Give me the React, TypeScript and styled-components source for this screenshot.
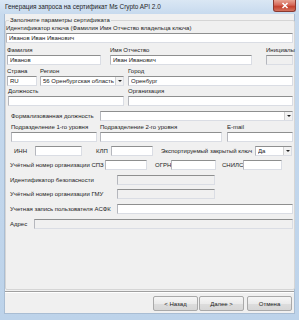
import React from "react";
import styled, { createGlobalStyle } from "styled-components";

const GlobalStyle = createGlobalStyle`
  html, body {
    margin: 0;
    padding: 0;
    background: #ffffff;
  }
  body {
    font-family: "Liberation Sans", "DejaVu Sans", sans-serif;
    font-size: 6px;
    color: #222;
  }
`;

interface FieldProps {
  label: string;
  width: number;
  ml?: number;
  value?: string;
  disabled?: boolean;
  combo?: boolean;
}

// label above, box below
const Field = ({ label, width, ml, value, disabled, combo }: FieldProps) => (
  <StyledField $w={width} $ml={ml}>
    <StyledLabel>{label}</StyledLabel>
    <Box value={value} disabled={disabled} combo={combo} />
  </StyledField>
);

interface BoxProps {
  value?: string;
  disabled?: boolean;
  combo?: boolean;
  width?: number;
}

const Box = ({ value, disabled, combo, width }: BoxProps) => (
  <StyledBox $disabled={disabled} $w={width}>
    <span>{value}</span>
    {combo && (
      <StyledArrow>
        <i />
      </StyledArrow>
    )}
  </StyledBox>
);

interface InlineProps {
  label: string;
  labelWidth: number;
  boxWidth: number;
  ml?: number;
  disabled?: boolean;
  value?: string;
  combo?: boolean;
}

// label to the left, box to the right
const Inline = ({ label, labelWidth, boxWidth, ml, disabled, value, combo }: InlineProps) => (
  <StyledInline $ml={ml}>
    <StyledSideLabel $w={labelWidth}>{label}</StyledSideLabel>
    <Box width={boxWidth} disabled={disabled} value={value} combo={combo} />
  </StyledInline>
);

const App = () => {
  return (
    <>
      <GlobalStyle />
      <StyledWindow>
        <StyledTitleBar>
          <StyledTitle>Генерация запроса на сертификат Ms Crypto API 2.0</StyledTitle>
          <StyledClose>
            <svg width="8" height="7" viewBox="0 0 8 7">
              <path d="M1.5 1 L6.5 6 M6.5 1 L1.5 6" stroke="#fff" strokeWidth="1.5" />
            </svg>
          </StyledClose>
        </StyledTitleBar>
        <StyledClient>
          <StyledGroup>
            <StyledLegend>Заполните параметры сертификата</StyledLegend>
            <StyledRow $mt={0}>
              <Field label="Идентификатор ключа (Фамилия Имя Отчество владельца ключа)" width={287} value="Иванов Иван Иванович" />
            </StyledRow>
            <StyledRow $mt={3} $pl={1}>
              <Field label="Фамилия" width={94} value="Иванов" />
              <Field label="Имя Отчество" ml={9} width={142} value="Иван Иванович" />
              <Field label="Инициалы" ml={14} width={27} disabled />
            </StyledRow>
            <StyledRow $mt={2} $pl={1}>
              <Field label="Страна" width={30} value="RU" />
              <Field label="Регион" ml={3} width={84} value="56 Оренбургская область" combo />
              <Field label="Город" ml={4} width={165} value="Оренбург" />
            </StyledRow>
            <StyledRow $mt={1} $pl={2}>
              <Field label="Должность" width={116} />
              <Field label="Организация" ml={4} width={165} />
            </StyledRow>
            <StyledRow $mt={5} $pl={5}>
              <Inline label="Формализованная должность" labelWidth={89} boxWidth={193} combo />
            </StyledRow>
            <StyledRow $mt={2} $pl={5}>
              <Field label="Подразделение 1-го уровня" width={86} />
              <Field label="Подразделение 2-го уровня" ml={3} width={122} />
              <Field label="E-mail" ml={5} width={66} />
            </StyledRow>
            <StyledRow $mt={4} $pl={8}>
              <Inline label="ИНН" labelWidth={21} boxWidth={47} />
              <Inline label="КЛП" ml={14} labelWidth={15} boxWidth={42} />
              <Inline label="Экспортируемый закрытый ключ" ml={8} labelWidth={94} boxWidth={37} value="Да" combo />
            </StyledRow>
            <StyledRow $mt={4} $pl={4}>
              <Inline label="Учётный номер организации СПЗ" labelWidth={95} boxWidth={42} />
              <Inline label="ОГРН" ml={8} labelWidth={16} boxWidth={45} />
              <Inline label="СНИЛС" ml={6} labelWidth={21} boxWidth={39} />
            </StyledRow>
            <StyledRow $mt={5} $pl={4}>
              <Inline label="Идентификатор безопасности" labelWidth={107} boxWidth={98} disabled />
            </StyledRow>
            <StyledRow $mt={4} $pl={4}>
              <Inline label="Учётный номер организации ГМУ" labelWidth={107} boxWidth={98} disabled />
            </StyledRow>
            <StyledRow $mt={5} $pl={4}>
              <Inline label="Учетная запись пользователя АСФК" labelWidth={107} boxWidth={176} />
            </StyledRow>
            <StyledRow $mt={5} $pl={4}>
              <Inline label="Адрес" labelWidth={24} boxWidth={259} disabled />
            </StyledRow>
          </StyledGroup>
          <StyledSeparator />
          <StyledButtons>
            <StyledButton>&lt; Назад</StyledButton>
            <StyledButton>Далее &gt;</StyledButton>
            <StyledButton $ml={3}>Отмена</StyledButton>
          </StyledButtons>
        </StyledClient>
      </StyledWindow>
    </>
  );
};

const StyledWindow = styled.div`
  width: 299px;
  height: 320px;
  display: flex;
  flex-direction: column;
  background: linear-gradient(180deg, #dae7f4 0px, #c7daee 14px, #bdd3ea 100%);
  box-sizing: border-box;
  overflow: hidden;
`;

const StyledTitleBar = styled.div`
  height: 14px;
  display: flex;
  align-items: center;
  justify-content: space-between;
  padding-left: 5px;
  padding-right: 3px;
  flex-shrink: 0;
`;

const StyledTitle = styled.div`
  font-size: 6.4px;
  color: #1f1f1f;
  white-space: nowrap;
  margin-top: -1px;
`;

const StyledClose = styled.div`
  width: 23px;
  height: 12px;
  margin-top: -2px;
  border-radius: 0 0 3px 3px;
  background: linear-gradient(180deg, #e8a493 0%, #d6695a 45%, #c4422f 60%, #d5735f 100%);
  border: 1px solid #8a3a31;
  border-top: none;
  box-sizing: border-box;
  display: flex;
  align-items: center;
  justify-content: center;
`;

const StyledClient = styled.div`
  flex: 1;
  margin: 0 4px 6px 4px;
  background: #f0f0f0;
  border-left: 1px solid #a9bdd3;
  border-right: 1px solid #a9bdd3;
  border-bottom: 1px solid #a9bdd3;
  display: flex;
  flex-direction: column;
  box-sizing: border-box;
`;

const StyledGroup = styled.div`
  margin: 6px 0 0 0;
  width: 290px;
  height: 270px;
  border: 1px solid #d5d5d5;
  border-radius: 2px;
  box-sizing: border-box;
  position: relative;
  padding: 3px 0 0 0;
`;

const StyledLegend = styled.div`
  position: absolute;
  top: -4px;
  left: 3px;
  padding: 0 1px;
  background: #f0f0f0;
  line-height: 7px;
`;

const StyledRow = styled.div<{ $pl?: number; $mt?: number }>`
  display: flex;
  align-items: flex-end;
  padding-left: ${(p) => p.$pl || 0}px;
  margin-top: ${(p) => p.$mt || 0}px;
`;

const StyledField = styled.div<{ $w: number; $ml?: number }>`
  width: ${(p) => p.$w}px;
  margin-left: ${(p) => p.$ml || 0}px;
  display: flex;
  flex-direction: column;
  flex-shrink: 0;
`;

const StyledLabel = styled.div`
  height: 9px;
  line-height: 9px;
  white-space: nowrap;
`;

const StyledSideLabel = styled.div<{ $w: number }>`
  width: ${(p) => p.$w}px;
  white-space: nowrap;
  flex-shrink: 0;
`;

const StyledInline = styled.div<{ $ml?: number }>`
  display: flex;
  align-items: center;
  margin-left: ${(p) => p.$ml || 0}px;
  flex-shrink: 0;
`;

const StyledBox = styled.div<{ $disabled?: boolean; $w?: number }>`
  height: 10px;
  ${(p) => (p.$w ? `width: ${p.$w}px;` : "")}
  box-sizing: border-box;
  background: ${(p) => (p.$disabled ? "#f0f0f0" : "#ffffff")};
  border: 1px solid #dadde4;
  border-top-color: #8e8f8f;
  border-left-color: #b5b7bd;
  display: flex;
  align-items: center;
  padding-left: 2px;
  font-size: 6px;
  color: #1a1a1a;
  white-space: nowrap;
  overflow: hidden;
  flex-shrink: 0;

  & > span {
    flex: 1;
    overflow: hidden;
  }
`;

const StyledArrow = styled.div`
  width: 7px;
  height: 8px;
  flex-shrink: 0;
  background: #f2f2f2;
  border-left: 1px solid #d0d0d0;
  display: flex;
  align-items: center;
  justify-content: center;

  & > i {
    width: 0;
    height: 0;
    border-left: 2px solid transparent;
    border-right: 2px solid transparent;
    border-top: 2px solid #222;
  }
`;

const StyledSeparator = styled.div`
  margin-top: 1px;
  height: 0;
  border-top: 1px solid #a0a0a0;
  border-bottom: 1px solid #ffffff;
`;

const StyledButtons = styled.div`
  display: flex;
  justify-content: flex-end;
  padding: 3px 2px 0 0;
`;

const StyledButton = styled.div<{ $ml?: number }>`
  width: 45px;
  height: 15px;
  margin-left: ${(p) => p.$ml || 1}px;
  box-sizing: border-box;
  border: 1px solid #a9a9a9;
  border-radius: 2px;
  background: linear-gradient(180deg, #f6f6f6 0%, #ebebeb 50%, #dddddd 51%, #d6d6d6 100%);
  display: flex;
  align-items: center;
  justify-content: center;
  font-size: 6px;
  color: #1a1a1a;
`;

export default App;
